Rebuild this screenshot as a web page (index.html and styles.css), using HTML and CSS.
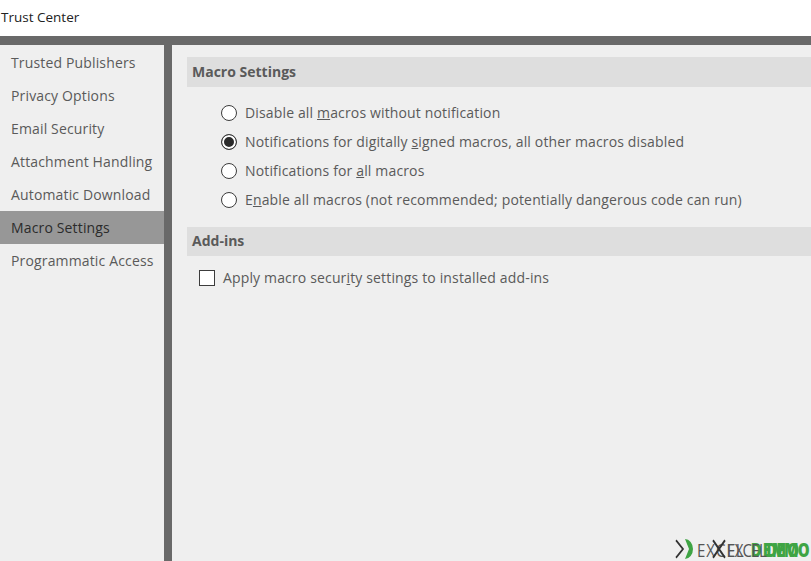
FILE: index.html
```html
<!DOCTYPE html>
<html lang="en">
<head>
    <meta charset="UTF-8">
    <title>Trust Center</title>
    <link rel="stylesheet" href="styles.css">
</head>
<body>
    <div class="title-bar">Trust Center</div>
    <div class="panes">
        <ul class="side-nav">
            <li>Trusted Publishers</li>
            <li>Privacy Options</li>
            <li>Email Security</li>
            <li>Attachment Handling</li>
            <li>Automatic Download</li>
            <li class="active">Macro Settings</li>
            <li>Programmatic Access</li>
        </ul>
        <div class="content">
            <h2 class="section-head">Macro Settings</h2>
            <div class="radio-list">
                <div class="option"><span class="radio"></span><span>Disable all <u>m</u>acros without notification</span></div>
                <div class="option"><span class="radio checked"></span><span>Notifications for digitally <u>s</u>igned macros, all other macros disabled</span></div>
                <div class="option"><span class="radio"></span><span>Notifications for <u>a</u>ll macros</span></div>
                <div class="option"><span class="radio"></span><span>E<u>n</u>able all macros (not recommended; potentially dangerous code can run)</span></div>
            </div>
            <h2 class="section-head addins">Add-ins</h2>
            <div class="check-row"><span class="checkbox"></span><span>Apply macro secur<u>i</u>ty settings to installed add-ins</span></div>
            <div class="watermark">
                <div class="mark mark-back">
                    <svg class="mark-icon" width="22" height="18" viewBox="0 0 22 18"><path d="M1 2l7 7-7 7" fill="none" stroke="#333" stroke-width="1.600"/><path d="M10 1a8 8 0 1 1 0 16l4-8z" fill="#3fa444"/></svg>
                    <span>EXCEL</span><b>DEMO</b>
                </div>
                <div class="mark mark-front">
                    <svg class="mark-icon" width="14" height="18" viewBox="0 0 14 18"><path d="M1 2l12 14M13 2L1 16" fill="none" stroke="#333" stroke-width="1.800"/></svg>
                    <span>EXCEL</span><b>DEMO</b>
                </div>
            </div>
        </div>
    </div>
</body>
</html>
```

FILE: styles.css
```css
html, body {
    margin: 0;
    height: 100%;
}
body {
    width: 811px;
    height: 561px;
    overflow: hidden;
    display: flex;
    flex-direction: column;
    background: #696969;
    font-family: "Open Sans", "Noto Sans", sans-serif;
    font-size: 14px;
    letter-spacing: 0.15px;
    color: #5a5a5a;
}
.title-bar {
    height: 36px;
    background: #fff;
    color: #222;
    padding-left: 1px;
    line-height: 35px;
    font-size: 13.5px;
    letter-spacing: 0;
    flex: none;
}
.panes {
    flex: 1;
    display: flex;
    gap: 8px;
    padding-top: 9px;
    min-height: 0;
}
.side-nav {
    width: 164px;
    flex: none;
    margin: 0;
    padding: 1px 0 0;
    list-style: none;
    background: #efefef;
}
.side-nav li {
    height: 33px;
    line-height: 33px;
    padding-left: 11px;
}
.side-nav .active {
    background: #979797;
    color: #2b2b2b;
}
.content {
    flex: 1;
    position: relative;
    background: #efefef;
    padding: 12px 0 0 15px;
}
.section-head {
    margin: 0;
    height: 30px;
    line-height: 29px;
    padding-left: 5px;
    background: #dedede;
    font-size: 14px;
    font-weight: 700;
    letter-spacing: 0;
    color: #5a5a5a;
}
.addins {
    margin-top: 13px;
    height: 29px;
    line-height: 27px;
}
.radio-list {
    padding: 11px 0 0 34px;
}
.option {
    height: 29px;
    display: flex;
    align-items: center;
    gap: 8px;
    white-space: nowrap;
}
.radio {
    width: 14px;
    height: 14px;
    border: 1px solid #3c3c3c;
    border-radius: 50%;
    background: #fff;
    flex: none;
}
.radio.checked {
    background: #2b2b2b;
    box-shadow: inset 0 0 0 2px #fff;
}
.check-row {
    display: flex;
    align-items: center;
    gap: 8px;
    height: 43px;
    padding-left: 12px;
}
.checkbox {
    width: 14px;
    height: 14px;
    border: 1px solid #3c3c3c;
    background: #fff;
    flex: none;
}
/* two overlapping copies of the logo, as in the source image */
.watermark {
    position: absolute;
    right: 0;
    bottom: 0;
    width: 138px;
    height: 24px;
    overflow: hidden;
}
.mark {
    position: absolute;
    top: 2px;
    display: flex;
    align-items: center;
    font-size: 15px;
    line-height: 20px;
    color: #555;
    transform: scaleY(1.25);
}
.mark b {
    color: #3fa444;
    font-weight: 800;
}
.mark-back {
    left: 2px;
    letter-spacing: 1px;
}
.mark-back b {
    margin-left: 6px;
}
.mark-front {
    left: 39px;
    letter-spacing: -0.7px;
}
.mark-front .mark-icon {
    margin-right: 1px;
}
```
